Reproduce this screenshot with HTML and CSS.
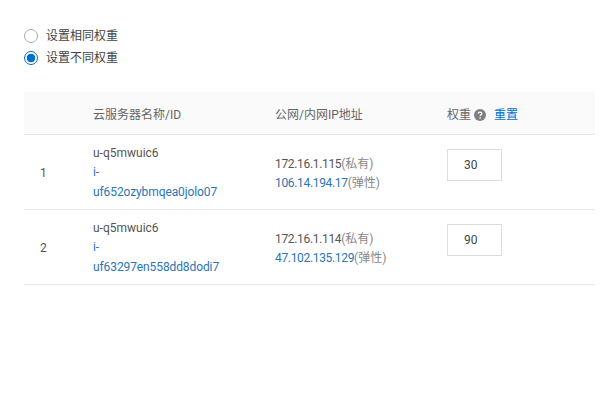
FILE: index.html
```html
<!DOCTYPE html>
<html lang="zh">
<head>
<meta charset="utf-8">
<title>设置权重</title>
<link rel="stylesheet" href="styles.css">
</head>
<body>
<div class="radios">
  <label class="radio"><span class="dot"></span>设置相同权重</label>
  <label class="radio"><span class="dot on"></span>设置不同权重</label>
</div>
<table class="grid">
  <thead>
    <tr>
      <th class="c-num"></th>
      <th class="c-name">云服务器名称/ID</th>
      <th class="c-ip">公网/内网IP地址</th>
      <th class="c-weight">
        <span class="head-weight">权重
          <svg class="help" width="12" height="12" viewBox="0 0 12 12"><circle cx="6" cy="6" r="6" fill="#7f7f7f"/><path d="M4.2 4.7c0-1 .8-1.6 1.8-1.6s1.8.6 1.8 1.5c0 1.3-1.7 1.3-1.7 2.5" fill="none" stroke="#fff" stroke-width="1.2"/><circle cx="6.1" cy="8.9" r=".8" fill="#fff"/></svg>
          <a class="link reset">重置</a>
        </span>
      </th>
    </tr>
  </thead>
  <tbody>
    <tr>
      <td class="num">1</td>
      <td class="names"><div class="name">u-q5mwuic6</div><a class="link id">i-<br>uf652ozybmqea0jolo07</a></td>
      <td class="ips"><div>172.16.1.115<span class="muted">(私有)</span></div><div><a class="link">106.14.194.17</a><span class="muted">(弹性)</span></div></td>
      <td class="weight"><div class="input">30</div></td>
    </tr>
    <tr>
      <td class="num">2</td>
      <td class="names"><div class="name">u-q5mwuic6</div><a class="link id">i-<br>uf63297en558dd8dodi7</a></td>
      <td class="ips"><div>172.16.1.114<span class="muted">(私有)</span></div><div><a class="link">47.102.135.129</a><span class="muted">(弹性)</span></div></td>
      <td class="weight"><div class="input">90</div></td>
    </tr>
  </tbody>
</table>
</body>
</html>
```

FILE: styles.css
```css
* { box-sizing: border-box; }
html, body { background: #fff; }
body {
  margin: 0;
  padding: 26px 16px 0 24px;
  font: 12px/19px Roboto, "Noto Sans CJK SC", sans-serif;
  color: #373d41;
}
.radios { display: flex; flex-direction: column; gap: 2px; margin-bottom: 24px; }
.radio { display: flex; align-items: center; gap: 8px; height: 20px; color: #444; }
.dot {
  width: 14px; height: 14px; border-radius: 50%;
  border: 1px solid #a9a9a9; background: #fff; flex: none;
}
.dot.on {
  border-color: #0070cc;
  background: radial-gradient(circle, #0070cc 0 4px, #fff 4.6px);
}
.grid { width: 571px; border-collapse: collapse; table-layout: fixed; }
th {
  height: 42px; padding: 5px 0 0; text-align: left; font-weight: 400;
  background: #fafafa; border-bottom: 1px solid #e8e8e8; color: #666;
}
td { height: 75px; padding: 0; border-bottom: 1px solid #ebebeb; vertical-align: middle; }
td.num { padding: 3px 0 0 16px; color: #555; }
.c-num { width: 69px; }
.c-name { width: 182px; }
.c-ip { width: 172px; }
.names { line-height: 19.5px; padding-top: 3px; }
.name { color: #555; }
.id { letter-spacing: -0.1px; }
.link { color: #2a75b5; }
.reset { color: #0070cc; margin-left: 5px; }
.head-weight { display: inline-flex; align-items: center; gap: 3px; }
.help { flex: none; }
.ips { padding-top: 5px; color: #555; letter-spacing: -0.33px; }
.muted { color: #888; letter-spacing: 0; }
td.weight { vertical-align: top; padding-top: 14px; }
.input {
  width: 55px; height: 32px; border: 1px solid #ddd;
  padding-left: 16px; line-height: 30px; color: #444;
}
```
